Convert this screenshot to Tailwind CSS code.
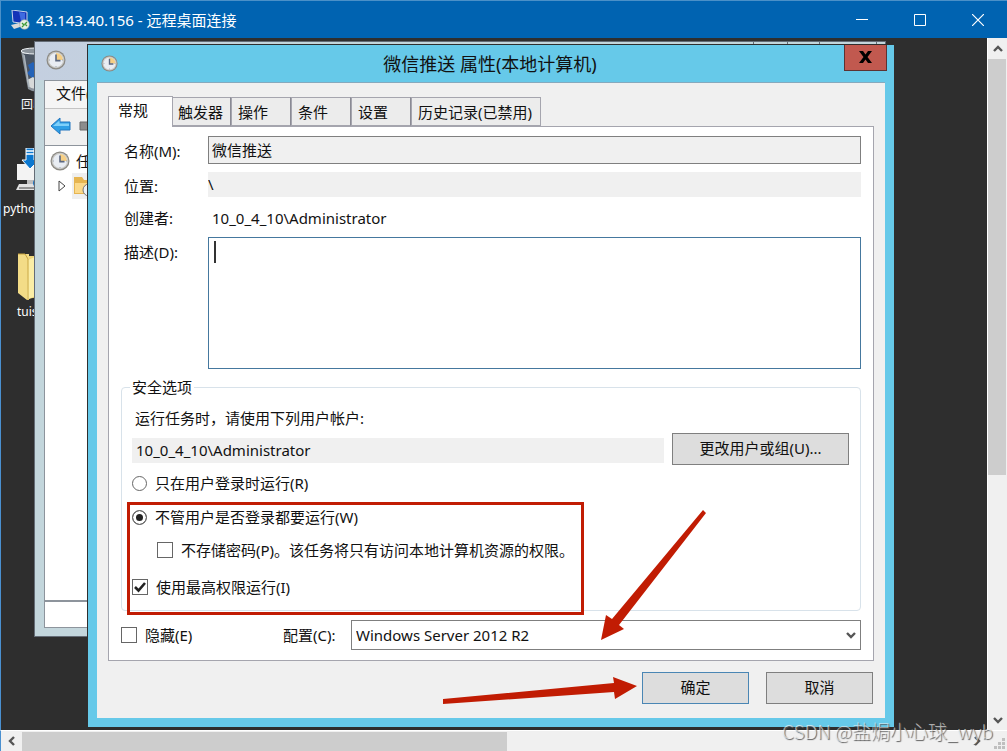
<!DOCTYPE html>
<html lang="zh-CN">
<head>
  <meta charset="UTF-8">
  <meta name="viewport" content="width=device-width, initial-scale=1.0">
  <title>43.143.40.156 - 远程桌面连接</title>
  <script src="https://cdn.jsdelivr.net/npm/@tailwindcss/browser@4"></script>
</head>
<body class="h-screen flex flex-col overflow-hidden bg-[#f0f0f0] text-[15px] leading-6 text-[#111] font-['Noto_Sans','Noto_Sans_CJK_SC',sans-serif]">

  <!-- shared symbols -->
  <svg class="hidden">
    <symbol id="clock" viewBox="0 0 20 20">
      <circle cx="10" cy="10" r="9.5" fill="#8b8983"/>
      <circle cx="10" cy="10" r="8.3" fill="#c9c9c6"/>
      <circle cx="10" cy="10" r="7" fill="#e9edf3"/>
      <path d="M10 10V3A7 7 0 0 1 17 10Z" fill="#f6cf85"/>
      <path d="M10 4.5V10.6H14.5" fill="none" stroke="#5b6780" stroke-width="1.6"/>
      <path d="M10 16v1M3 10h1M16 10h1" stroke="#9aa3b0"/>
    </symbol>
    <symbol id="chevron" viewBox="0 0 10 10">
      <path d="M1 3L5 7L9 3" fill="none" stroke="currentColor" stroke-width="2.4"/>
    </symbol>
  </svg>

  <!-- title bar -->
  <header class="h-[38px] shrink-0 flex items-center bg-[#0063b1] border-t border-l border-[#4a90c8] text-white">
    <svg class="w-5 h-5 ml-[9px]" viewBox="0 0 20 20">
      <path d="M2 0L17 2V14L3 12Z" fill="#1433b8" stroke="#c8d4ea"/>
      <path d="M9 2L15 3V12L11 11Z" fill="#3f6be0"/>
      <path d="M1 15L9 13L13 16L4 19Z" fill="#d9d9d9"/>
      <circle cx="14.5" cy="14.5" r="4.8" fill="#e7efe4" stroke="#9aa89a" stroke-width=".6"/>
      <path d="M12 13l2 2-2 2M17 12l-2 2 2 2" fill="none" stroke="#3c9a35" stroke-width="1.3"/>
    </svg>
    <h1 class="ml-[6px] flex-1">43.143.40.156 - 远程桌面连接</h1>
    <button class="w-[58px] h-full grid place-items-center" aria-label="最小化">
      <svg class="w-3 h-3" viewBox="0 0 12 12"><path d="M0 5.5H12" stroke="#fff"/></svg>
    </button>
    <button class="w-[58px] h-full grid place-items-center" aria-label="最大化">
      <svg class="w-3 h-3" viewBox="0 0 12 12"><path d="M.5 .5H11.5V11.5H.5Z" fill="none" stroke="#fff"/></svg>
    </button>
    <button class="w-[58px] h-full grid place-items-center" aria-label="关闭">
      <svg class="w-3 h-3" viewBox="0 0 12 12"><path d="M0 0L12 12M12 0L0 12" stroke="#fff" stroke-width="1.2"/></svg>
    </button>
  </header>

  <div class="flex-1 flex min-h-0">
    <!-- remote desktop -->
    <main class="relative flex-1 overflow-hidden bg-[#2e2e2e] border-l border-[#4a90d0]">

      <!-- desktop icons -->
      <div class="absolute left-5 top-[9px] text-white text-xs whitespace-nowrap">
        <svg class="w-9 h-[46px]" viewBox="0 0 36 46">
          <path d="M0 4L28 4L23 42Q15 47 7 42Z" fill="#8b939b"/>
          <path d="M3 7L26 7L22 40Q15 44 8 40Z" fill="#4b5563"/>
          <ellipse cx="14" cy="4" rx="14" ry="3" fill="#8b939b" stroke="#eef2f5"/>
          <path d="M7 18l5-3 4 4-3 4 4 5-6 3-5-5 3-3Z" fill="#2462b8"/>
          <path d="M6 33l6-3 5 4 5-2-1 8q-6 4-13 0Z" fill="#d7dad9"/>
          <path d="M3 8L8 40" stroke="#aab3bb" stroke-width="1.5"/>
        </svg>
        <p class="leading-6">回收站</p>
      </div>
      <div class="absolute left-[2px] top-[110px] text-white text-xs whitespace-nowrap">
        <svg class="w-9 h-[46px] ml-3" viewBox="0 0 36 46">
          <path d="M2 16H34V32H2Z" fill="#f3f3f3"/>
          <path d="M12 32H22V37H12Z" fill="#bdbdbd"/>
          <path d="M4 36H30L32 42H1Z" fill="#e2e2e2"/>
          <path d="M4 40H28" stroke="#777" stroke-width="1.5"/>
          <path d="M11 0H19V12H24L15 21L7 12H11Z" fill="#0b78d0" stroke="#fff"/>
          <path d="M11 3H19M11 6H19" stroke="#fff" stroke-width="1.5"/>
          <circle cx="23" cy="35" r="5" fill="#1673c4"/>
        </svg>
        <p class="mt-[3px] leading-6">python-3.8</p>
      </div>
      <div class="absolute left-4 top-[215px] text-white text-xs whitespace-nowrap">
        <svg class="w-9 h-[50px]" viewBox="0 0 36 50">
          <path d="M10 3L34 3V42L10 46Z" fill="#efd678"/>
          <path d="M1 1H12V47H10L1 40Z" fill="#f3dc87"/>
          <path d="M11 7L20 3V42L10 47Z" fill="#fbeea6"/>
          <path d="M1 1H8L11 6V47" fill="none" stroke="#c9a43e"/>
        </svg>
        <p class="leading-6 -mt-[3px]">tuisong</p>
      </div>

      <!-- task scheduler window behind the dialog -->
      <section class="absolute left-[33px] top-[3px] right-[101px] h-[596px] flex flex-col bg-[#c3d6dc] border border-[#646c76] pl-[9px] pr-2 pb-2">
        <div class="h-[38px] flex items-center -ml-[9px] pl-[11px] pb-[2px] bg-linear-to-r from-[#c4cfe0] to-[#c3d6dc] to-30%">
          <svg class="w-5 h-5"><use href="#clock"/></svg>
        </div>
        <div class="flex-1 flex flex-col border border-[#8d949c] bg-white">
          <div class="h-7 shrink-0 bg-[#f5f5f5] border-b border-[#c4c4c4] pl-[11px]">文件(F)</div>
          <div class="h-[37px] shrink-0 flex items-center gap-2 bg-[#f0f0f0] border-b border-[#8d949c] pl-[5px] pb-[2px]">
            <svg class="w-[21px] h-[18px]" viewBox="0 0 21 18">
              <path d="M1 9L10 1V5H20V13H10V17Z" fill="#2f9fe6" stroke="#2376bf"/>
              <path d="M3 9L9.5 3.5V6.500H19V9Z" fill="#7fd0fa"/>
            </svg>
            <svg class="w-5 h-[18px]" viewBox="0 0 20 18"><path d="M1 5H12V1L19 9L12 17V13H1Z" fill="#8c8c8c" stroke="#6a6a6a"/></svg>
          </div>
          <div class="flex-1 pt-[3px] pl-[5px]">
            <div class="flex items-center gap-[6px]">
              <svg class="w-5 h-5"><use href="#clock"/></svg>任务
            </div>
            <div class="flex items-center pl-2 gap-[6px]">
              <svg class="w-2 h-3" viewBox="0 0 8 12"><path d="M1 1L7 6L1 11Z" fill="#fff" stroke="#444"/></svg>
              <svg class="w-7 h-[26px] bg-[#efefef]" viewBox="0 0 28 26">
                <path d="M2 4H10L12 7H22V21H2Z" fill="#e6b551"/>
                <path d="M3 10H21V20H3Z" fill="#fbd98a"/>
                <circle cx="17" cy="17" r="6" fill="#eef2f6" stroke="#777"/>
                <path d="M17 13V17H20" fill="none" stroke="#445"/>
              </svg>
            </div>
          </div>
          <div class="h-[27px] shrink-0 border-t-2 border-[#8d949c] bg-white"></div>
        </div>
        <!-- caption button dividers -->
        <div class="absolute top-0 right-2 h-[3px] w-[124px] flex border-l border-[#646c76]">
          <span class="w-[34px] border-r border-[#646c76]"></span>
          <span class="w-8 border-r border-[#646c76]"></span>
          <span class="w-[57px] border-r border-[#646c76]"></span>
        </div>
      </section>

      <!-- task properties dialog -->
      <section role="dialog" aria-labelledby="dlg-title" class="absolute left-[86px] right-[93px] top-[6px] bg-[#66c9e9] border-l border-t border-[#2e2e2e] px-[9px] pb-[9px]">
        <div class="relative h-[37px] flex items-center">
          <svg class="w-[17px] h-[17px] ml-1"><use href="#clock"/></svg>
          <h2 id="dlg-title" class="flex-1 text-center text-lg pr-[23px]">微信推送 属性(本地计算机)</h2>
          <button class="absolute -right-[2px] top-0 w-[43px] h-[26px] pb-[2px] grid place-items-center bg-[#c1594f] border border-t-0 border-[#5d3232]" aria-label="关闭">
            <svg class="w-[13px] h-3" viewBox="0 0 13 12"><path d="M0 0H4L6.500 3.500L9 0H13L8.500 6L13 12H9L6.500 8.500L4 12H0L4.500 6Z" fill="#000"/></svg>
          </button>
        </div>

        <div class="bg-[#f0f0f0] border-t border-[#86a9bd] px-[11px] pt-[13px] pb-[14px]">
          <!-- tabs -->
          <div role="tablist" class="relative flex items-end -mb-px">
            <button role="tab" aria-selected="true" class="w-[65px] h-[31px] bg-white border border-b-0 border-[#a5a5ae] pl-[9px] pb-1 text-left">常规</button>
            <button role="tab" class="w-[58px] h-[29px] mb-px bg-[#ececec] border border-l-0 border-[#a5a5ae] border-r-[#8a8a94] pl-[5px] text-left whitespace-nowrap">触发器</button>
            <button role="tab" class="w-[60px] h-[29px] mb-px bg-[#ececec] border border-[#a5a5ae] border-r-[#8a8a94] pl-[6px] text-left">操作</button>
            <button role="tab" class="w-[60px] h-[29px] mb-px bg-[#ececec] border border-[#a5a5ae] border-r-[#8a8a94] pl-[6px] text-left">条件</button>
            <button role="tab" class="w-[60px] h-[29px] mb-px bg-[#ececec] border border-[#a5a5ae] border-r-[#8a8a94] pl-[6px] text-left">设置</button>
            <button role="tab" class="w-[130px] h-[29px] mb-px bg-[#ececec] border border-[#a5a5ae] pl-[6px] text-left whitespace-nowrap">历史记录(已禁用)</button>
          </div>

          <div role="tabpanel" class="bg-white border border-[#a5a5ae] px-3 pt-[9px] pb-[10px]">
            <div class="grid grid-cols-[84px_1fr] pl-[3px]">
              <label for="name" class="pt-[3px]">名称(M):</label>
              <input id="name" value="微信推送" readonly class="h-7 mb-2 min-w-0 bg-[#f0f0f0] border border-[#7f7f7f] px-[3px] pb-[2px]">
              <label for="path" class="pt-[2px]">位置:</label>
              <input id="path" value="\" readonly class="h-[25px] min-w-0 bg-[#f0f0f0] pb-[2px]">
              <span class="h-[39px] pt-2">创建者:</span>
              <span class="h-[39px] pt-2 pl-1">10_0_4_10\Administrator</span>
              <label for="desc" class="pt-[3px]">描述(D):</label>
              <div class="relative">
                <textarea id="desc" class="block w-full h-[132px] resize-none bg-white border border-[#45789e] px-[5px]"></textarea>
                <span class="absolute left-[6px] top-1 w-[2px] h-[22px] bg-[#333]"></span>
              </div>
            </div>

            <div class="relative">
              <fieldset class="mt-[6px] min-w-0 border border-[#d8e2ea] rounded pl-[10px] pr-[11px] pb-px">
                <legend class="h-6 px-[2px] -ml-[2px]">安全选项</legend>
                <p class="h-[34px] pt-[7px] pl-[3px]">运行任务时，请使用下列用户帐户:</p>
                <div class="h-8 flex items-end gap-2">
                  <output class="flex-1 h-[25px] mb-[2px] bg-[#f0f0f0] pl-1">10_0_4_10\Administrator</output>
                  <button class="w-[177px] h-8 pb-[2px] bg-[#dddddd] border border-[#7f7f7f]">更改用户或组(U)...</button>
                </div>
                <label class="h-9 flex items-center gap-2">
                  <input type="radio" name="logon" class="appearance-none w-[15px] h-[15px] rounded-full border border-[#666] bg-white">
                  只在用户登录时运行(R)
                </label>
                <label class="h-8 flex items-center gap-2">
                  <input type="radio" name="logon" checked class="appearance-none w-[15px] h-[15px] rounded-full border border-[#666] checked:bg-[#222] checked:shadow-[inset_0_0_0_3px_#fff]">
                  不管用户是否登录都要运行(W)
                </label>
                <label class="h-[34px] flex items-center gap-2 pl-[25px] whitespace-nowrap">
                  <input type="checkbox" class="appearance-none w-4 h-4 border border-[#666] bg-white">
                  不存储密码(P)。该任务将只有访问本地计算机资源的权限。
                </label>
                <label class="h-[42px] flex items-center gap-2 pb-[2px]">
                  <span class="relative w-4 h-4">
                    <input type="checkbox" checked class="peer block appearance-none w-4 h-4 border border-[#666] bg-white">
                    <svg class="absolute inset-0 w-4 h-4 hidden peer-checked:block pointer-events-none" viewBox="0 0 16 16"><path d="M3 8L6.500 11.500L13 4" fill="none" stroke="#222" stroke-width="2.6"/></svg>
                  </span>
                  使用最高权限运行(I)
                </label>
              </fieldset>
              <!-- red highlight -->
              <div class="absolute left-[6px] -bottom-[4px] w-[457px] h-[113px] border-3 border-[#c11c03] pointer-events-none"></div>
            </div>

            <div class="mt-[9px] flex items-center">
              <label class="flex items-center gap-2 w-[162px]">
                <input type="checkbox" class="appearance-none w-4 h-4 border border-[#666] bg-white">
                隐藏(E)
              </label>
              <label for="config" class="w-[68px]">配置(C):</label>
              <div class="relative flex-1">
                <select id="config" class="block w-full h-[30px] appearance-none bg-white border border-[#7f7f7f] pl-1">
                  <option>Windows Server 2012 R2</option>
                </select>
                <svg class="absolute right-[5px] top-[10px] w-[10px] h-[10px] text-[#555] pointer-events-none"><use href="#chevron"/></svg>
              </div>
            </div>
          </div>

          <div class="mt-[11px] pr-px flex justify-end gap-[17px]">
            <button class="w-[107px] h-8 pb-[2px] bg-[#dddddd] border border-[#4a86b4]">确定</button>
            <button class="w-[107px] h-8 pb-[2px] bg-[#dddddd] border border-[#7f7f7f]">取消</button>
          </div>
        </div>

        <!-- arrows -->
        <svg class="absolute left-[355px] top-[465px] w-[264px] h-[197px] pointer-events-none" viewBox="0 0 264 197" fill="#c11c03">
          <path d="M260 0L263 3L176 115L181 119L158 130L163 105L169 109Z"/>
          <path d="M0 189L171 173L170 167L194 176L172 189L171 182L0 194Z"/>
        </svg>
      </section>
    </main>

    <!-- vertical scrollbar -->
    <div class="w-5 shrink-0 flex flex-col items-center bg-[#f0f0f0] border-l border-white text-[#555]">
      <span class="h-[21px] grid place-items-center"><svg class="w-[10px] h-[10px] rotate-180"><use href="#chevron"/></svg></span>
      <span class="w-full h-[416px] bg-[#cdcdcd] border-r border-[#f0f0f0]"></span>
      <span class="mt-auto h-[21px] grid place-items-center"><svg class="w-[10px] h-[10px]"><use href="#chevron"/></svg></span>
    </div>
  </div>

  <!-- horizontal scrollbar -->
  <div class="relative h-[21px] shrink-0 flex items-center border-t border-l border-t-white border-l-[#4a90d0] text-[#555]">
    <span class="w-[21px] grid place-items-center"><svg class="w-[10px] h-[10px] rotate-90"><use href="#chevron"/></svg></span>
    <span class="w-[485px] h-[19px] bg-[#cdcdcd]"></span>
    <span class="ml-auto mr-[25px]"><svg class="w-[10px] h-[10px] -rotate-90"><use href="#chevron"/></svg></span>
    <svg class="absolute right-[2px] bottom-[2px] w-[11px] h-[11px]" viewBox="0 0 11 11" fill="#bfbfbf">
      <path d="M8 0h3v3h-3zM4 4h3v3h-3zM8 4h3v3h-3zM0 8h3v3h-3zM4 8h3v3h-3zM8 8h3v3h-3z"/>
    </svg>
    <p class="absolute right-[14px] -top-[14px] text-[19px] leading-7 font-light whitespace-nowrap text-white/60 [text-shadow:1px_1px_1px_#555] font-['Noto_Sans_CJK_SC',sans-serif]">CSDN @盐焗小心球_wyb</p>
  </div>
</body>
</html>
